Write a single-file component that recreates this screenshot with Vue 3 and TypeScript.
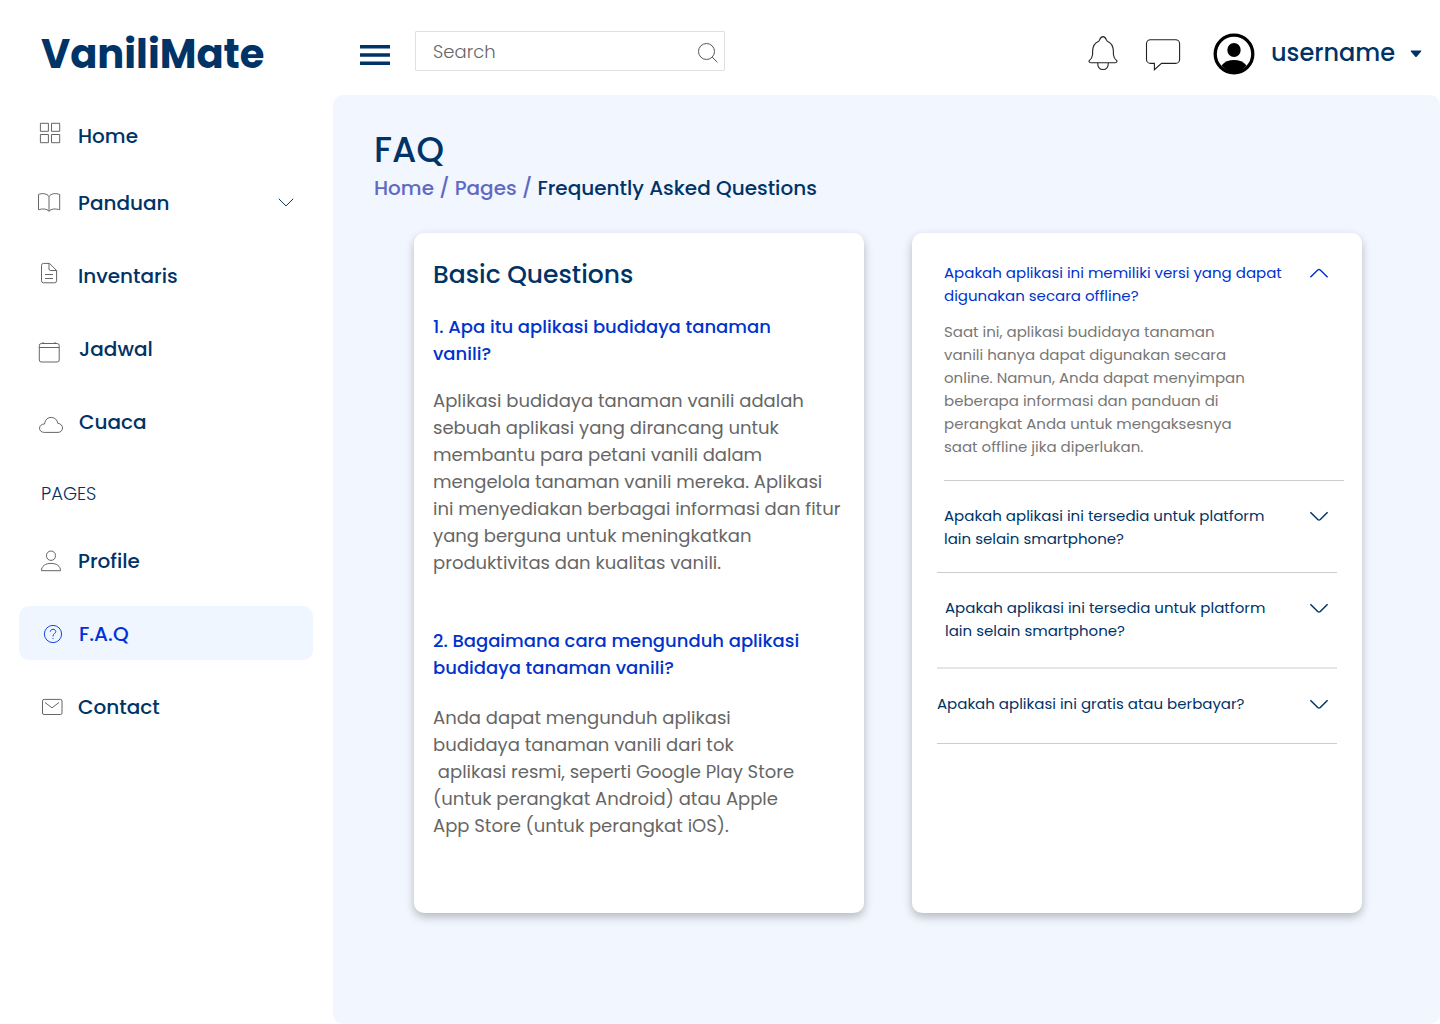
<script setup lang="ts">
interface NavItem {
  label: string
  gap: number
  indent?: number
  box: string
  path: string
  active?: boolean
  expandable?: boolean
}

const mainNav: NavItem[] = [
  {
    label: 'Home', gap: 0, box: '19 109 59 54',
    path: 'M40.400 123.300h8v8h-8zM51.500 123.300h8.200v8h-8.200zM40.400 134.500h8v8.200h-8zM51.500 134.500h8.200v8.200h-8.200z',
  },
  {
    label: 'Panduan', gap: 13, expandable: true, box: '19 176 59 54',
    path: 'M49 196.500C47 193.300 42 193 38.500 194.500V209.800C42 208.500 47 208.600 49 211.300C51 208.600 56 208.500 59.700 209.800V194.500C56 193 51 193.300 49 196.500zV211.300',
  },
  {
    label: 'Inventaris', gap: 19, box: '19 249 59 54',
    path: 'M43.500 263.400H49.500L56.600 270.500V280.800a2 2 0 0 1-2 2H43.500a2 2 0 0 1-2-2V265.400a2 2 0 0 1 2-2zM49 263.500V269a1.500 1.500 0 0 0 1.500 1.500H56.500M45 274.500H53M45 278.500H53',
  },
  {
    label: 'Jadwal', gap: 19, indent: 1, box: '19 322 59 54',
    path: 'M41.300 343.500H57.200a2 2 0 0 1 2 2V360a2 2 0 0 1-2 2H41.300a2 2 0 0 1-2-2V345.500a2 2 0 0 1 2-2zM39.300 347.500H59.200M43 342V343.500M55 342V343.500',
  },
  {
    label: 'Cuaca', gap: 19, indent: 1, box: '19 395 59 54',
    path: 'M44.300 432.400H58C60.600 432.400 62.500 430.400 62.500 428C62.500 425.500 60.500 423.500 57.800 423.300C57.500 420 54.700 417.400 51.200 417.400C48 417.400 45.500 419.400 44.900 422.400L44.600 423.900C41.500 424.100 39.500 426 39.500 428.300C39.500 430.500 41.500 432.400 44.300 432.400z',
  },
]

const pageNav: NavItem[] = [
  {
    label: 'Profile', gap: 13, box: '19 534 59 54',
    path: 'M51 551C53.700 551 55.500 553 55.500 555.700S53.700 560.400 51 560.400S46.500 558.400 46.500 555.700S48.300 551 51 551zM41.500 570.700C41.500 566 45.500 563.400 51 563.400S60.500 566 60.500 570.700z',
  },
  {
    label: 'F.A.Q', gap: 18, indent: 1, active: true, box: '19 606 59 54',
    path: 'M53 625.400a8.600 8.600 0 1 1 0 17.200a8.600 8.600 0 1 1 0-17.200zM50.300 631.700C50.400 630.100 51.500 629.300 53 629.300S55.800 630.200 55.800 631.600C55.800 633.500 53 633.700 53 636V636.500M53 638V639',
  },
  {
    label: 'Contact', gap: 20, box: '19 680 59 54',
    path: 'M44 699.400H60.500a1.500 1.500 0 0 1 1.500 1.500V713a1.500 1.500 0 0 1-1.500 1.500H44a1.500 1.500 0 0 1-1.500-1.500V700.900a1.500 1.500 0 0 1 1.500-1.500zM45 702.500L52 707.800L59 702.500',
  },
]

const answers: { question: string; answer: string }[] = [
  {
    question: '1. Apa itu aplikasi budidaya tanaman\nvanili?',
    answer: [
      'Aplikasi budidaya tanaman vanili adalah',
      'sebuah aplikasi yang dirancang untuk',
      'membantu para petani vanili dalam',
      'mengelola tanaman vanili mereka. Aplikasi',
      'ini menyediakan berbagai informasi dan fitur',
      'yang berguna untuk meningkatkan',
      'produktivitas dan kualitas vanili.',
    ].join('\n'),
  },
  {
    question: '2. Bagaimana cara mengunduh aplikasi\nbudidaya tanaman vanili?',
    answer: [
      'Anda dapat mengunduh aplikasi',
      'budidaya tanaman vanili dari tok',
      ' aplikasi resmi, seperti Google Play Store',
      '(untuk perangkat Android) atau Apple',
      'App Store (untuk perangkat iOS).',
    ].join('\n'),
  },
]

const offlineQuestion = 'Apakah aplikasi ini memiliki versi yang dapat\ndigunakan secara offline?'

const offlineAnswer = [
  'Saat ini, aplikasi budidaya tanaman',
  'vanili hanya dapat digunakan secara',
  'online. Namun, Anda dapat menyimpan',
  'beberapa informasi dan panduan di',
  'perangkat Anda untuk mengaksesnya',
  'saat offline jika diperlukan.',
].join('\n')

const platform = 'Apakah aplikasi ini tersedia untuk platform\nlain selain smartphone?'

const closed = [
  { name: 'first', question: platform },
  { name: 'second', question: platform },
  { name: 'third', question: 'Apakah aplikasi ini gratis atau berbayar?' },
]
</script>

<template>
  <div class="app">
    <aside class="sidebar">
      <div class="brand">VaniliMate</div>
      <nav class="nav">
        <a v-for="item in mainNav" :key="item.label" class="nav-item" :style="{ marginTop: item.gap + 'px' }">
          <svg class="nav-icon" :viewBox="item.box"><path :d="item.path" /></svg>
          <span class="nav-label" :style="{ marginLeft: (item.indent || 0) + 'px' }">{{ item.label }}</span>
          <svg v-if="item.expandable" class="nav-chevron" viewBox="0 0 16 9"><path d="M.8.8 8 7.900 15.200.8" /></svg>
        </a>
        <div class="nav-heading">PAGES</div>
        <a v-for="item in pageNav" :key="item.label" class="nav-item" :class="{ active: item.active }" :style="{ marginTop: item.gap + 'px' }">
          <svg class="nav-icon" :viewBox="item.box"><path :d="item.path" /></svg>
          <span class="nav-label" :style="{ marginLeft: (item.indent || 0) + 'px' }">{{ item.label }}</span>
        </a>
      </nav>
    </aside>

    <div class="content">
      <header class="topbar">
        <svg class="burger" viewBox="0 0 30 20"><path d="M0 0h30v3.500H0zM0 8.250h30v3.500H0zM0 16.500h30V20H0z" /></svg>
        <div class="search">
          <span class="placeholder">Search</span>
          <svg class="search-icon" viewBox="697 42 22 22"><circle cx="706.500" cy="51.500" r="8" /><path d="M712.200 57.200 717.500 62.300" /></svg>
        </div>
        <div class="tools">
          <svg class="bell" viewBox="1088 35 30 36">
            <path d="M1091 62.700H1115C1116.500 62.700 1117.500 61.500 1116.700 60.600C1114.500 58.800 1113.600 57.200 1113.400 54.500V51.500C1113.400 46.500 1111.800 43 1107.300 41.200C1106 40.700 1106.200 36.600 1103 36.600S1100 40.700 1098.700 41.200C1094.200 43 1092.600 46.500 1092.600 51.500V54.500C1092.400 57.200 1091.500 58.800 1089.300 60.600C1088.500 61.500 1089.500 62.700 1091 62.700zM1097.700 62.900C1097.700 67.200 1099.700 69.500 1103 69.500S1108.300 67.200 1108.300 62.900" />
          </svg>
          <svg class="chat" viewBox="1145 38 36 34">
            <path d="M1150.500 39.700H1175.600a4 4 0 0 1 4 4V59.400a4 4 0 0 1-4 4H1161.500L1154.400 69.700V63.400H1150.500a4 4 0 0 1-4-4V43.700a4 4 0 0 1 4-4z" />
          </svg>
          <svg class="avatar" viewBox="0 0 42 42">
            <circle class="ring" cx="21" cy="21" r="18.800" />
            <ellipse cx="21" cy="17" rx="6.700" ry="7" />
            <path d="M8.500 32.500C11.500 28.800 16 27 21 27S30.500 28.800 33.500 32.500C30.500 36.500 26 39 21 39S11.500 36.500 8.500 32.500z" />
          </svg>
          <span class="username">username</span>
          <svg class="caret" viewBox="0 0 12 8"><path d="M1.200.6h9.600q.9 0 .3.8L6.700 6.700q-.7.700-1.400 0L.9 1.400Q.3.6 1.200.6z" /></svg>
        </div>
      </header>

      <main class="panel">
        <h1>FAQ</h1>
        <div class="breadcrumb">Home / Pages / <span class="current">Frequently Asked Questions</span></div>

        <div class="cards">
          <section class="card basic">
            <h2>Basic Questions</h2>
            <div v-for="(entry, i) in answers" :key="i" class="entry">
              <h3>{{ entry.question }}</h3>
              <div class="answer">{{ entry.answer }}</div>
            </div>
          </section>

          <section class="card accordion">
            <div class="item open">
              <div class="question">{{ offlineQuestion }}</div>
              <svg class="chevron" viewBox="0 0 20 12"><path d="M1.400 10.200 8.700 3q1.300-1 2.600 0l7.300 7.200" /></svg>
            </div>
            <div class="details">{{ offlineAnswer }}</div>
            <hr class="inset" />
            <template v-for="row in closed" :key="row.name">
              <div class="item" :class="row.name">
                <div class="question">{{ row.question }}</div>
                <svg class="chevron" viewBox="0 0 20 12"><path d="M1.400 2.300 8.700 9.500q1.300 1 2.600 0l7.300-7.200" /></svg>
              </div>
              <hr :class="{ soft: row.name === 'second' }" />
            </template>
          </section>
        </div>
      </main>
    </div>
  </div>
</template>

<style>
body {
  background: #fff;
}
</style>

<style scoped>
.app {
  display: flex;
  width: 1440px;
  height: 1024px;
  overflow: hidden;
  background: #fff;
  color: #003366;
  font-family: Poppins, Inter, "Open Sans", sans-serif;
}

.app svg {
  display: block;
  flex: none;
  fill: none;
}

.sidebar {
  flex: none;
  width: 333px;
}

.brand {
  height: 109px;
  box-sizing: border-box;
  padding: 1px 0 0 41px;
  font-size: 40px;
  font-weight: 700;
  line-height: 106px;
}

.nav {
  display: flex;
  flex-direction: column;
  width: 294px;
  margin-left: 19px;
}

.nav-item {
  display: flex;
  align-items: center;
  height: 54px;
  border-radius: 10px;
}

.nav-icon {
  width: 59px;
  height: 54px;
  stroke: #555;
  stroke-width: 0.9;
  stroke-linejoin: round;
}

.nav-label {
  padding-top: 1px;
  font-size: 20px;
  font-weight: 500;
  line-height: 53px;
}

.nav-chevron {
  width: 16px;
  height: 9px;
  margin-left: auto;
  margin-right: 19px;
  margin-bottom: 1px;
  stroke: #003366;
  stroke-width: 1;
}

.nav-heading {
  height: 54px;
  margin-top: 18px;
  padding-left: 22px;
  font-size: 18px;
  font-weight: 300;
  line-height: 54px;
}

.active {
  background: #eff6ff;
  color: #0033d4;
}

.active .nav-label {
  padding-top: 3px;
  line-height: 51px;
}

.active .nav-icon {
  stroke: #0033d4;
}

.content {
  flex: none;
  width: 1107px;
  display: flex;
  flex-direction: column;
}

.topbar {
  display: flex;
  align-items: flex-start;
  height: 95px;
  flex: none;
}

.app .burger {
  width: 30px;
  height: 20px;
  margin: 45px 25px 0 27px;
  fill: #003366;
}

.search {
  display: flex;
  align-items: center;
  justify-content: space-between;
  box-sizing: border-box;
  width: 310px;
  height: 40px;
  margin-top: 31px;
  padding: 0 5px 0 17px;
  border: 1px solid #e0e0e0;
  border-radius: 1px;
}

.placeholder {
  padding-top: 2px;
  color: #666;
  font-size: 18px;
  font-weight: 300;
  line-height: 38px;
}

.search-icon {
  width: 22px;
  height: 22px;
  margin-top: 3px;
  stroke: #555;
  stroke-width: 1;
}

.tools {
  display: flex;
  align-items: flex-start;
  margin-left: 363px;
}

.bell {
  width: 30px;
  height: 36px;
  margin-top: 35px;
  stroke: #222;
  stroke-width: 1.1;
}

.chat {
  width: 36px;
  height: 34px;
  margin: 38px 0 0 27px;
  stroke: #222;
  stroke-width: 1.1;
}

.app .avatar {
  width: 42px;
  height: 42px;
  margin: 33px 0 0 32px;
  fill: #000;
}

.app .ring {
  fill: none;
  stroke: #000;
  stroke-width: 3.3;
}

.username {
  width: 139px;
  margin: 33px 0 0 16px;
  font-size: 24px;
  font-weight: 500;
  line-height: 40px;
}

.app .caret {
  width: 12px;
  height: 8px;
  margin: 50px 0 0;
  fill: #003366;
}

.panel {
  flex: 1;
  box-sizing: border-box;
  padding: 30px 0 0 41px;
  border-radius: 10px;
  background: #f1f6ff;
}

h1,
h2,
h3 {
  margin: 0;
  font-weight: 500;
}

h1 {
  height: 50px;
  font-size: 35px;
  line-height: 50px;
}

.breadcrumb {
  height: 26px;
  font-size: 20px;
  font-weight: 500;
  line-height: 26px;
  color: #6069c2;
}

.current {
  color: #003366;
}

.cards {
  display: flex;
  gap: 48px;
  margin: 32px 0 0 40px;
}

.card {
  width: 450px;
  height: 680px;
  box-sizing: border-box;
  border-radius: 10px;
  background: #fff;
  box-shadow: 0 4px 10px rgba(0, 0, 0, 0.25);
}

.basic {
  padding: 22px 0 0 19px;
}

h2 {
  height: 39px;
  font-size: 25px;
  line-height: 39px;
}

h3,
.answer,
.question,
.details {
  white-space: pre;
}

h3 {
  padding-top: 19px;
  color: #0033cc;
  font-size: 18px;
  line-height: 27px;
}

.entry + .entry {
  padding-top: 32px;
}

.answer {
  padding-top: 20px;
  color: #666;
  font-size: 18px;
  line-height: 27px;
}

.entry + .entry .answer {
  padding-top: 23px;
}

.accordion {
  padding: 28px 18px 0 25px;
  font-size: 15px;
  line-height: 23px;
}

.item {
  display: flex;
  justify-content: space-between;
  align-items: flex-start;
  padding-right: 15px;
}

.open {
  padding-left: 7px;
  color: #0033cc;
}

.item .chevron {
  width: 20px;
  height: 12px;
  margin-top: 6px;
  stroke: currentColor;
  stroke-width: 1.5;
}

.details {
  padding: 13px 0 22px 7px;
  color: #777;
}

hr {
  width: 400px;
  height: 1px;
  margin: 0;
  border: 0;
  background: #ccc;
}

.inset {
  margin-left: 7px;
}

.soft {
  height: 2px;
  background: #e4e6e6;
}

.first {
  padding-top: 23px;
  padding-bottom: 22px;
  padding-left: 7px;
}

.second {
  padding-top: 23px;
  padding-bottom: 25px;
  padding-left: 8px;
}

.third {
  padding-top: 23px;
  padding-bottom: 28px;
}
</style>
